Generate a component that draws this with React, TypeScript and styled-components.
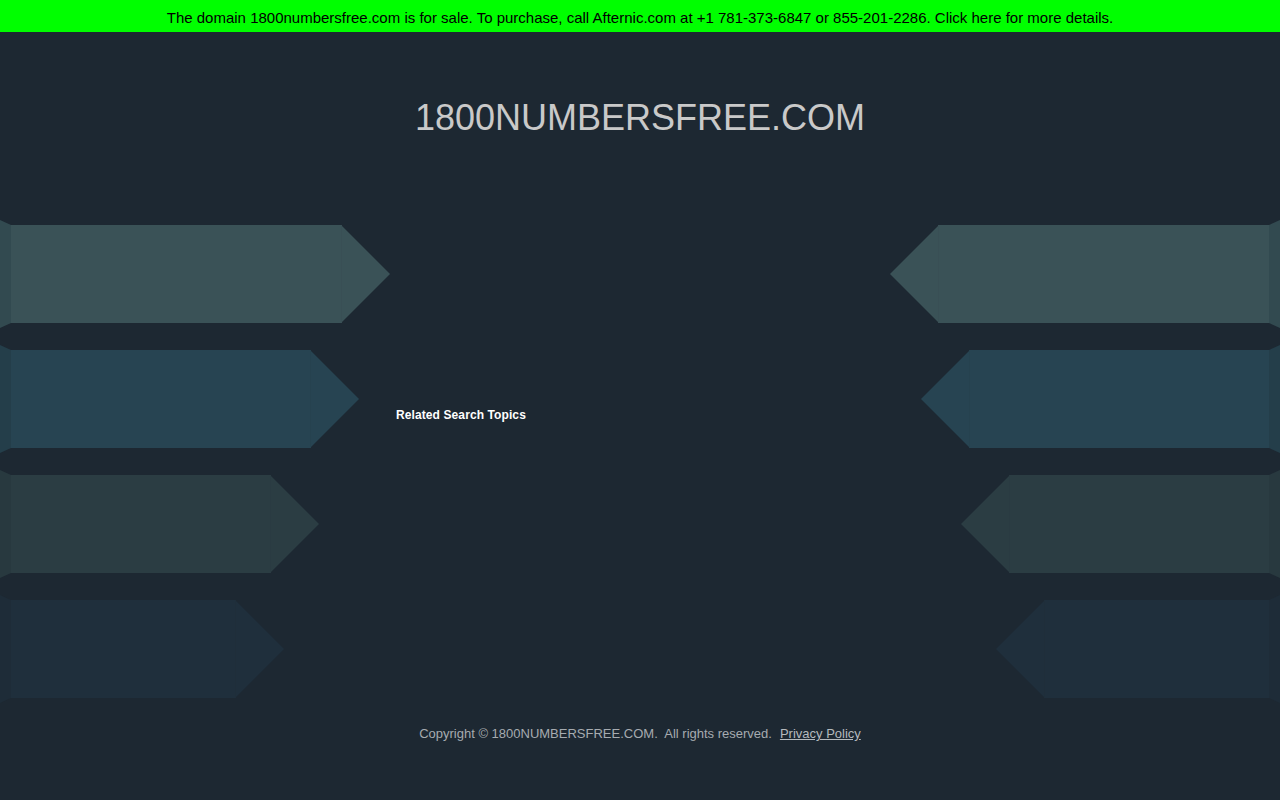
import React from 'react';
import styled, { createGlobalStyle } from 'styled-components';

const GlobalStyle = createGlobalStyle`
  html, body {
    margin: 0;
    padding: 0;
    background: #1d2832;
  }
  body {
    font-family: "Liberation Sans", Arial, sans-serif;
  }
`;

interface ArrowRow {
  width: number;
  body: string;
  edge: string;
  tab: string;
}

const rows: ArrowRow[] = [
  { width: 390, body: '#3a5257', edge: '#394f55', tab: '#324a50' },
  { width: 359, body: '#274452', edge: '#26424f', tab: '#243e4a' },
  { width: 319, body: '#2b3d43', edge: '#2a3b42', tab: '#28393f' },
  { width: 284, body: '#1f2f3c', edge: '#1f2e3a', tab: '#1e2c38' },
];

const Page = styled.div`
  min-height: 800px;
  display: flex;
  flex-direction: column;
`;

const SaleBanner = styled.a`
  display: block;
  height: 32px;
  line-height: 35px;
  background: #00ff00;
  color: #000;
  text-align: center;
  font-size: 15px;
  text-decoration: none;
  cursor: pointer;
`;

const Header = styled.header`
  padding: 65px 0 82px;
  text-align: center;
`;

const Title = styled.h1`
  margin: 0;
  font-size: 36px;
  line-height: 41px;
  font-weight: 400;
  color: #c9c9c9;
`;

const Main = styled.main`
  display: grid;
  grid-template-columns: 390px 1fr 390px;
`;

const ArrowColumn = styled.div<{ $side: 'left' | 'right' }>`
  display: flex;
  flex-direction: column;
  gap: 17px;
  align-items: ${p => (p.$side === 'left' ? 'flex-start' : 'flex-end')};
`;

const ArrowSvg = styled.svg<{ $side: 'left' | 'right' }>`
  display: block;
  height: 108px;
  transform: ${p => (p.$side === 'right' ? 'scaleX(-1)' : 'none')};
`;

const Center = styled.div`
  padding: 185px 0 0 6px;
`;

const TopicsHeading = styled.span`
  font-size: 12px;
  line-height: 14px;
  font-weight: 700;
  color: #ffffff;
  letter-spacing: 0.1px;
`;

const Footer = styled.footer`
  padding: 23px 0 0;
  text-align: center;
  font-size: 13px;
  line-height: 15px;
  color: #a6abb0;
`;

const PolicyLink = styled.a`
  margin-left: 8px;
  color: #b4b9bd;
  text-decoration: underline;
  cursor: pointer;
`;

const Arrow = ({ row, side }: { row: ArrowRow; side: 'left' | 'right' }) => {
  const w = row.width;
  const neck = w - 49;
  return (
    <ArrowSvg $side={side} width={w} viewBox={`0 0 ${w} 108`}>
      <polygon points="0,0 11,5 11,103 0,108" fill={row.tab} />
      <polygon points={`11,5 ${neck},5 ${w},54 ${neck},103 11,103`} fill={row.body} />
      <line x1={neck + 0.5} y1={5} x2={neck + 0.5} y2={103} stroke={row.edge} strokeWidth={1} />
    </ArrowSvg>
  );
};

export default function App() {
  return (
    <Page>
      <GlobalStyle />
      <SaleBanner>
        The domain 1800numbersfree.com is for sale. To purchase, call Afternic.com at +1 781-373-6847 or 855-201-2286. Click here for more details.
      </SaleBanner>
      <Header>
        <Title>1800NUMBERSFREE.COM</Title>
      </Header>
      <Main>
        <ArrowColumn $side="left">
          {rows.map((r, i) => (
            <Arrow key={i} row={r} side="left" />
          ))}
        </ArrowColumn>
        <Center>
          <TopicsHeading>Related Search Topics</TopicsHeading>
        </Center>
        <ArrowColumn $side="right">
          {rows.map((r, i) => (
            <Arrow key={i} row={r} side="right" />
          ))}
        </ArrowColumn>
      </Main>
      <Footer>
        Copyright © 1800NUMBERSFREE.COM.&nbsp; All rights reserved.
        <PolicyLink>Privacy Policy</PolicyLink>
      </Footer>
    </Page>
  );
}
